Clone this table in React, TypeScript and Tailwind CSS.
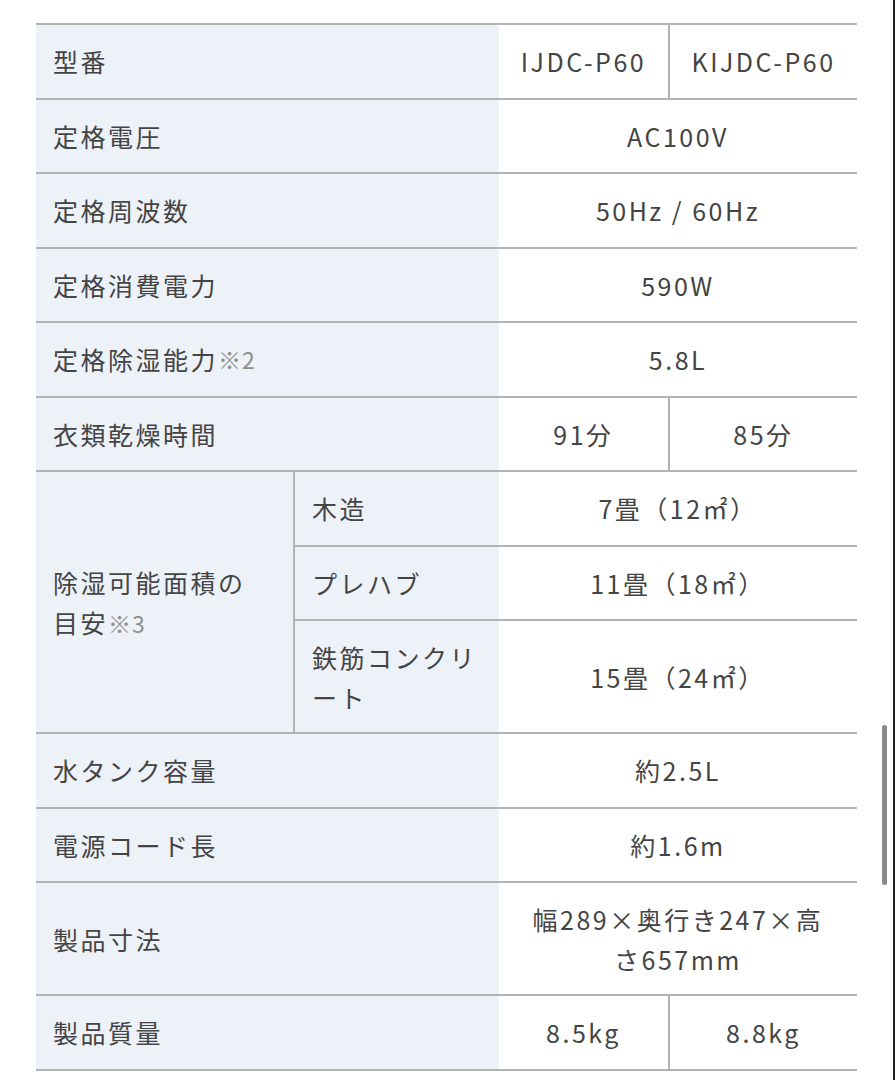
import React from 'react';

// 仕様表
type Spec = {
  label: React.ReactNode;
  values: string[];
  tall?: boolean;
};

const font = { fontFamily: '"Noto Sans CJK JP", "Noto Sans", sans-serif' };

const Note = ({ n }: { n: string }) => (
  <span className="text-[23px] tracking-[0.04em] text-[#8f8f8f]">※{n}</span>
);

const topSpecs: Spec[] = [
  { label: '型番', values: ['IJDC-P60', 'KIJDC-P60'] },
  { label: '定格電圧', values: ['AC100V'] },
  { label: '定格周波数', values: ['50Hz / 60Hz'] },
  { label: '定格消費電力', values: ['590W'] },
  { label: <>定格除湿能力<Note n="2" /></>, values: ['5.8L'] },
  { label: '衣類乾燥時間', values: ['91分', '85分'] },
];

const areaSpecs: Spec[] = [
  { label: '木造', values: ['7畳（12㎡）'] },
  { label: 'プレハブ', values: ['11畳（18㎡）'] },
  { label: <>鉄筋コンクリ<br />ート</>, values: ['15畳（24㎡）'], tall: true },
];

const bottomSpecs: Spec[] = [
  { label: '水タンク容量', values: ['約2.5L'] },
  { label: '電源コード長', values: ['約1.6m'] },
  { label: '製品寸法', values: ['幅289×奥行き247×高\nさ657mm'], tall: true },
  { label: '製品質量', values: ['8.5kg', '8.8kg'] },
];

function Values({ values }: { values: string[] }) {
  if (values.length === 2) {
    return (
      <div className="flex w-[358px]">
        <div className="flex w-[169px] items-center justify-center">{values[0]}</div>
        <div className="flex w-[189px] items-center justify-center border-l-2 border-[#b3b3b3]">
          {values[1]}
        </div>
      </div>
    );
  }
  return (
    <div className="flex w-[358px] items-center justify-center whitespace-pre-line text-center">
      {values[0]}
    </div>
  );
}

function Row({ spec }: { spec: Spec }) {
  return (
    <div
      className={`flex border-t-2 border-[#b3b3b3] ${spec.tall ? 'h-[113px]' : 'h-[74.5px]'}`}
    >
      <div className="flex w-[463px] items-center bg-[#edf1f8] pl-[17px]">{spec.label}</div>
      <Values values={spec.values} />
    </div>
  );
}

export default function App() {
  return (
    <div
      className="relative h-[1080px] w-[895px] overflow-hidden border-r-2 border-[#222] bg-white"
      style={font}
    >
      <div className="ml-[36px] mt-[23px] w-[821px] text-[25px] leading-[40px] tracking-[0.1em] text-[#444]">
        {topSpecs.map((s, i) => (
          <Row key={i} spec={s} />
        ))}

        {/* 除湿可能面積の目安 */}
        <div className="flex border-t-2 border-[#b3b3b3]">
          <div className="flex w-[257px] items-center bg-[#edf1f8] pl-[17px]">
            <div>
              除湿可能面積の
              <br />
              目安<Note n="3" />
            </div>
          </div>
          <div className="flex w-[564px] flex-col border-l-2 border-[#b3b3b3]">
            {areaSpecs.map((s, i) => (
              <div
                key={i}
                className={`flex ${i > 0 ? 'border-t-2 border-[#b3b3b3]' : ''} ${
                  s.tall ? 'h-[113px]' : i === 0 ? 'h-[72.5px]' : 'h-[74.5px]'
                }`}
              >
                <div className="flex w-[204px] items-center bg-[#edf1f8] pl-[17px]">{s.label}</div>
                <Values values={s.values} />
              </div>
            ))}
          </div>
        </div>

        {bottomSpecs.map((s, i) => (
          <Row key={i} spec={s} />
        ))}
        <div className="border-t-2 border-[#b3b3b3]" />
      </div>

      {/* scrollbar */}
      <div className="absolute left-[882px] top-[725px] h-[160px] w-[5px] rounded-full bg-[#8a8a8a]" />
    </div>
  );
}
